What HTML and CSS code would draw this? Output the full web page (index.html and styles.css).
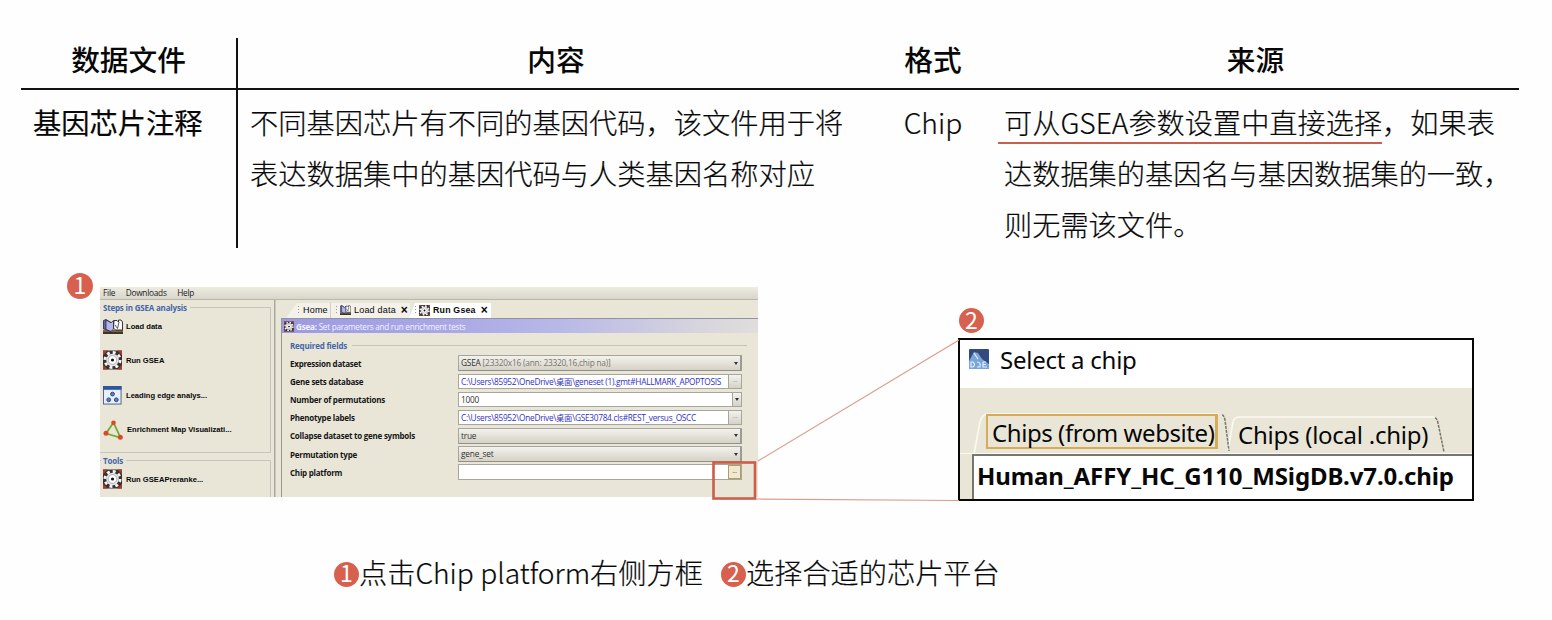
FILE: index.html
```html
<!DOCTYPE html>
<html lang="zh-CN">
<head>
<meta charset="utf-8">
<title>基因芯片注释</title>
<link rel="stylesheet" href="styles.css">
</head>
<body>
<svg class="defs" width="0" height="0" aria-hidden="true">
  <symbol id="gear" viewBox="0 0 20 20">
    <rect width="20" height="20" fill="#39302f"/>
    <path d="M0 0h5L0 5zM20 0v5l-5-5zM0 20v-5l5 5zM20 20h-5l5-5z" fill="#a53a32"/>
    <circle cx="10" cy="10" r="8" fill="none" stroke="#f4f4f6" stroke-width="3" stroke-dasharray="3.14 3.14"/>
    <circle cx="10" cy="10" r="6.6" fill="#e9e9ee"/>
    <circle cx="10" cy="10" r="4.6" fill="#fff" stroke="#888" stroke-width=".7"/>
    <circle cx="10" cy="10" r="1.7" fill="#111"/>
  </symbol>
  <symbol id="books" viewBox="0 0 20 15">
    <rect y="11" width="20" height="4" fill="#403524"/>
    <path d="M0 12h20" stroke="#b09a66" stroke-width="1"/>
    <path d="M.5 1.500L3 .5l5 3v9L3 10.500l-2.500-.5z" fill="#6664a8" stroke="#25254a" stroke-width=".8"/>
    <path d="M3 1l5 2.800 2.500-2.300v8.500L8 12.500 3 10.500z" fill="#b7b6ec" stroke="#25254a" stroke-width=".8"/>
    <path d="M11 1.500h3l1.500 1.500V1h2.500l1.500 2v8h-7L10.500 9z" fill="#f9f9f9" stroke="#222" stroke-width=".9"/>
    <path d="M12 6l2.500 3.500L16 3" fill="none" stroke="#333" stroke-width=".8"/>
  </symbol>
  <symbol id="edge" viewBox="0 0 20 20">
    <rect x=".5" y=".5" width="18.500" height="18.500" fill="#e8eff8" stroke="#4b5f8c"/>
    <rect width="19.500" height="4" fill="#2d55a0"/>
    <g fill="#5b82c4" stroke="#27427c"><circle cx="10" cy="8.500" r="2"/><circle cx="6" cy="14.500" r="2"/><circle cx="14" cy="14.500" r="2"/></g>
  </symbol>
  <symbol id="map" viewBox="0 0 20 20">
    <path d="M10.500 2.500L3 13.500l14.500 4z" fill="none" stroke="#6fae2e" stroke-width="1.800"/>
    <g fill="#e0452c"><circle cx="10.500" cy="2.800" r="2.300"/><circle cx="3" cy="13.300" r="2.500"/><circle cx="17.300" cy="17.300" r="2.500"/></g>
  </symbol>
</svg>

<main class="page">
  <section class="table">
    <div class="cell head first">数据文件</div>
    <div class="cell head">内容</div>
    <div class="cell head">格式</div>
    <div class="cell head">来源</div>
    <div class="cell body first name">基因芯片注释</div>
    <div class="cell body content">不同基因芯片有不同的基因代码，该文件用于将<br>表达数据集中的基因代码与人类基因名称对应</div>
    <div class="cell body format">Chip</div>
    <div class="cell body source"><span class="marked">可从GSEA参数设置中直接选择</span>，如果表<br>达数据集的基因名与基因数据集的一致，<br>则无需该文件。</div>
  </section>

  <section class="figures">
    <span class="badge"><span>1</span></span>
    <div class="app">
      <div class="menu"><span>File</span><span>Downloads</span><span>Help</span></div>
      <div class="main">
        <aside class="side">
          <div class="group steps">
            <div class="legend">Steps in GSEA analysis</div>
            <div class="item load"><svg class="i-books"><use href="#books"/></svg>Load data</div>
            <div class="item run"><svg class="i-gear"><use href="#gear"/></svg>Run GSEA</div>
            <div class="item"><svg class="i-edge"><use href="#edge"/></svg>Leading edge analys...</div>
            <div class="item"><svg class="i-map"><use href="#map"/></svg>Enrichment Map Visualizati...</div>
          </div>
          <div class="group tools">
            <div class="legend">Tools</div>
            <div class="item"><svg class="i-gear"><use href="#gear"/></svg>Run GSEAPreranke...</div>
          </div>
        </aside>
        <div class="work">
          <div class="tabs">
            <div class="tab home"><i class="grip"></i><span>Home</span></div>
            <div class="tab loadtab"><i class="grip"></i><svg class="t-books" viewBox="0 0 20 15" preserveAspectRatio="none"><use href="#books" width="20" height="15"/></svg><span>Load data</span><b class="close">×</b></div>
            <div class="tab active"><i class="grip"></i><svg class="t-gear"><use href="#gear"/></svg><span>Run Gsea</span><b class="close">×</b></div>
          </div>
          <div class="panel">
            <div class="banner"><svg class="b-gear"><use href="#gear"/></svg><span><b>Gsea:</b> Set parameters and run enrichment tests</span></div>
            <div class="required"><span>Required fields</span></div>
            <div class="form">
              <label>Expression dataset</label><div class="field combo"><span>GSEA <em>[23320x16 (ann: 23320,16,chip na)]</em></span><i class="arrow"></i></div>
              <label>Gene sets database</label><div class="field text link"><span>C:\Users\85952\OneDrive\桌面\geneset (1).gmt#HALLMARK_APOPTOSIS</span><i class="more">···</i></div>
              <label>Number of permutations</label><div class="field text"><span>1000</span><i class="drop"></i></div>
              <label>Phenotype labels</label><div class="field text link"><span>C:\Users\85952\OneDrive\桌面\GSE30784.cls#REST_versus_OSCC</span><i class="more">···</i></div>
              <label>Collapse dataset to gene symbols</label><div class="field combo"><span>true</span><i class="arrow"></i></div>
              <label>Permutation type</label><div class="field combo"><span>gene_set</span><i class="arrow"></i></div>
              <label>Chip platform</label><div class="field text"><span></span><i class="more hot">···</i></div>
            </div>
          </div>
        </div>
      </div>
    </div>

    <div class="second">
      <span class="badge two"><span>2</span></span>
      <div class="dialog">
        <div class="title">
          <svg class="logo" viewBox="0 0 20 20"><rect width="20" height="20" rx="1" fill="#344a7c"/><path d="M0 12L5 3l4 1 4 6 7 5v5H0z" fill="#79a5d8"/><path d="M2 18v-5h2q3 2.500 0 5zM8 13q4 0 3 5H8m6-5h3m-3 2.500h3M14 13v5h4M5 4l4 6" fill="none" stroke="#e2efff" stroke-width="1.200"/></svg>
          <span>Select a chip</span>
        </div>
        <div class="chips">
          <svg class="edges" width="512" height="68" viewBox="0 0 512 68" fill="none">
            <path d="M14 66L20 34Q22 26 28 26H259M268 62L273 34Q274 29 280 29H474" stroke="#fbfaf1" stroke-width="1.600"/>
            <path d="M262 27q2 0 3 5l4 31M475 30q2 0 3 5l6 29" stroke="#77756d" stroke-width="1.500" stroke-dasharray="3 1"/>
          </svg>
          <span class="chiptab website">Chips (from website)</span>
          <span class="chiptab local">Chips (local .chip)</span>
        </div>
        <div class="bottom"><div class="list">Human_AFFY_HC_G110_MSigDB.v7.0.chip</div></div>
      </div>
    </div>

    <svg class="callout" width="260" height="170" viewBox="0 0 260 170" fill="none">
      <path d="M47 123L248 2M45 161L248 162.500" stroke="#d99d8d" stroke-width="1.200"/>
      <rect x="2.500" y="124.500" width="41.500" height="36" stroke="#cb5d49" stroke-width="2.600"/>
    </svg>
  </section>

  <footer class="caption">
    <span class="badge small"><span>1</span></span><span class="c-one">点击Chip platform右侧方框</span>
    <span class="badge small next"><span>2</span></span><span>选择合适的芯片平台</span>
  </footer>
</main>
</body>
</html>
```

FILE: styles.css
```css
* { box-sizing: border-box; }
body { margin: 0; background: #fefefe; color: #080808; font-family: "Noto Sans CJK SC", sans-serif; }
i, em { font-style: normal; }
svg { display: block; flex: none; }
.defs { position: absolute; }
.page { width: 1552px; height: 620px; padding-top: 38px; overflow: hidden; }

/* table */
.table { display: grid; grid-template-columns: 217px 636px 118px 527px; grid-template-rows: 52px 158px; margin-left: 21px; width: 1498px; }
.cell { white-space: nowrap; }
.head { border-bottom: 2px solid #111; font-size: 28.700px; font-weight: 500; line-height: 41px; text-align: center; }
.first { border-right: 2px solid #111; }
.body { padding-top: 7.400px; font-size: 28.250px; line-height: 50.700px; font-weight: 300; -webkit-text-stroke: .2px #080808; }
.name { padding-left: 12px; font-weight: 400; }
.content { padding-left: 12px; }
.format { text-align: center; }
.source { padding-left: 12px; font-size: 28.200px; }
.marked { background: linear-gradient(#c9604f, #c9604f) 0 100% / 100% 2px no-repeat; margin-left: -6px; padding: 0 0 2px 6px; }

/* figures */
.badge { display: flex; align-items: center; justify-content: center; flex: none; width: 26px; height: 26px; border-radius: 50%; background: #d8604e; color: #fff; font-size: 23px; line-height: 1; font-weight: 400; }
.badge > span { margin-top: -3px; }
.figures { position: relative; display: flex; height: 254px; padding-left: 67px; }
.figures > .badge { margin-top: 25px; }
.app { display: flex; flex-direction: column; width: 658px; height: 210px; margin: 39px 0 0 7px; background: #e9e6d8; font-family: "Open Sans", "Noto Sans CJK SC", sans-serif; font-size: 8px; overflow: hidden; white-space: nowrap; }
.menu { display: flex; gap: 10.500px; height: 14px; padding-left: 3px; line-height: 12px; font-size: 8.300px; letter-spacing: -.25px; background: linear-gradient(#eeebe1, #d8d5ca); border-bottom: 1px solid #b9b7ae; color: #222; }
.main { display: flex; flex: 1; }
.side { width: 175px; padding: 7px 3px 0 0; border-right: 1px solid #aaa89f; }
.group { position: relative; border: 1px solid #c7c5bb; border-left: 0; }
.steps { height: 146px; }
.tools { height: 60px; margin-top: 7px; }
.legend { width: max-content; margin: -6px 0 0 1px; padding: 0 3px 0 2px; background: #e9e6d8; color: #4565a8; font-size: 8px; letter-spacing: -.2px; font-weight: 700; line-height: 11px; }
.item { display: flex; align-items: center; height: 34.700px; gap: 4px; padding-left: 3px; font-family: "Liberation Sans", Arial, sans-serif; font-size: 7.600px; font-weight: 700; }
.load { height: 30px; padding-bottom: 4px; gap: 3px; }
.tools .item { height: 26px; }
.i-books { width: 20px; height: 15px; }
.i-gear { width: 19px; height: 20px; }
.i-edge { width: 19px; height: 19px; }
.i-map { width: 20px; height: 20px; }
.work { flex: 1; padding-left: 5px; border-left: 1px solid #cbc9bf; }
.tabs { display: flex; height: 18px; padding: 3px 0 0 5px; font-family: "Liberation Sans", Arial, sans-serif; font-size: 9px; letter-spacing: .2px; }
.tab { display: flex; align-items: center; height: 15px; padding-bottom: 1px; background: #f3f1e9; gap: 4px; }
.home { width: 45px; padding-left: 12px; clip-path: polygon(11px 0, 100% 0, 100% 100%, 0 100%); border-right: 1px solid #d2d0c6; }
.loadtab { width: 79px; padding-left: 5px; gap: 3px; }
.active { width: 82px; margin-left: -1px; padding-left: 6px; gap: 3px; background: #fff; clip-path: polygon(6px 0, 100% 0, 100% 100%, 0 100%); font-weight: 700; font-size: 8.800px; }
.grip { width: 1px; height: 9px; background: repeating-linear-gradient(#999 0 1px, transparent 1px 3px); }
.close { margin-left: 2px; font-size: 12px; line-height: 10px; }
.t-books { width: 11px; height: 10px; }
.t-gear { width: 11px; height: 11px; }
.panel { height: 180px; border-top: 1px solid #9193a5; border-left: 1px solid #96958f; }
.banner { display: flex; align-items: center; gap: 2px; height: 14px; padding-left: 2px; background: linear-gradient(90deg, #9c9be2 0, #a9a8e5 35%, #b8b8e8 58%, #d9d7dc 90%, #e0dddc); color: #f4f3ff; font-size: 8.200px; letter-spacing: -.27px; }
.b-gear { width: 10px; height: 11px; }
.required { display: flex; align-items: center; gap: 5px; height: 21px; padding: 4px 11px 0 8px; color: #4565a8; font-weight: 700; font-size: 8px; letter-spacing: -.2px; }
.required::after { content: ""; flex: 1; height: 1px; background: #c5c3ba; }
.form { display: grid; grid-template-columns: 168px 284px; grid-auto-rows: 18.200px; align-items: center; padding-left: 8px; }
.form label { font-weight: 700; font-size: 8px; letter-spacing: -.24px; color: #161616; }
.field { display: flex; align-items: stretch; height: 15.500px; border: 1px solid #a6a59f; line-height: 13px; font-size: 8.300px; letter-spacing: -.28px; color: #333; }
.field > span { flex: 1; padding-left: 2px; }
.combo { background: linear-gradient(#f3f2ec, #d5d2c7); border-right: 2px solid #9c9a94; border-bottom: 1px solid #918f88; border-radius: 1px; }
.combo em { color: #77756f; }
.combo span { letter-spacing: -.2px; }
.text { background: #fff; }
.link { color: #3030c4; }
.arrow, .drop { display: flex; align-items: center; justify-content: center; width: 9px; }
.arrow::after, .drop::after { content: ""; border: 2.300px solid transparent; border-top: 3px solid #333; border-bottom: 0; }
.drop, .more { background: linear-gradient(#f3f2ec, #d5d2c7); border-left: 1px solid #a6a59f; }
.more { width: 13px; flex: none; text-align: center; font-size: 7px; color: #888; }
.hot { border: 1px solid #b79c5a; background: #f0e8cf; color: #444; }

.second { margin: 60px 0 0 200px; display: flex; flex-direction: column; }
.two { width: 25px; height: 25px; margin-left: 1px; }
.dialog { display: flex; flex-direction: column; width: 516px; height: 163px; margin-top: 5px; border: 2px solid #080808; background: #fff; overflow: hidden; font-family: "Noto Sans", sans-serif; white-space: nowrap; letter-spacing: -.25px; }
.title { display: flex; gap: 11px; height: 48px; padding: 9px 0 0 9px; font-size: 24px; line-height: 21px; }
.logo { width: 20px; height: 20px; }
.chips { position: relative; display: flex; height: 67px; padding: 26px 0 0 26px; background: #e9e6d8; font-size: 24px; border-bottom: 1px solid #faf9f2; }
.edges { position: absolute; left: 0; top: 0; }
.chiptab { position: relative; height: 35px; line-height: 34px; }
.website { width: 232px; padding-left: 4px; border: 2px solid #d8ab57; border-right-width: 3px; letter-spacing: -.43px; }
.local { margin-left: 20px; padding-top: 4px; }
.bottom { flex: 1; padding-left: 12px; background: #e9e6d8; }
.list { height: 45px; padding-left: 3px; border-left: 2px solid #77756f; border-top: 2px solid #77756f; background: #fff; font-size: 24px; font-weight: 700; line-height: 40px; letter-spacing: -.1px; }
.callout { position: absolute; left: 711px; top: 90px; }

/* caption */
.caption { display: flex; align-items: center; height: 62px; margin-top: 41px; padding-left: 334px; font-size: 28.200px; font-weight: 300; -webkit-text-stroke: .2px #080808; white-space: nowrap; }
.caption > span:not(.badge) { margin-top: -6px; }
.caption .badge { -webkit-text-stroke: 0; }
.small { width: 25px; height: 25px; }
.c-one { width: 362px; }
```
